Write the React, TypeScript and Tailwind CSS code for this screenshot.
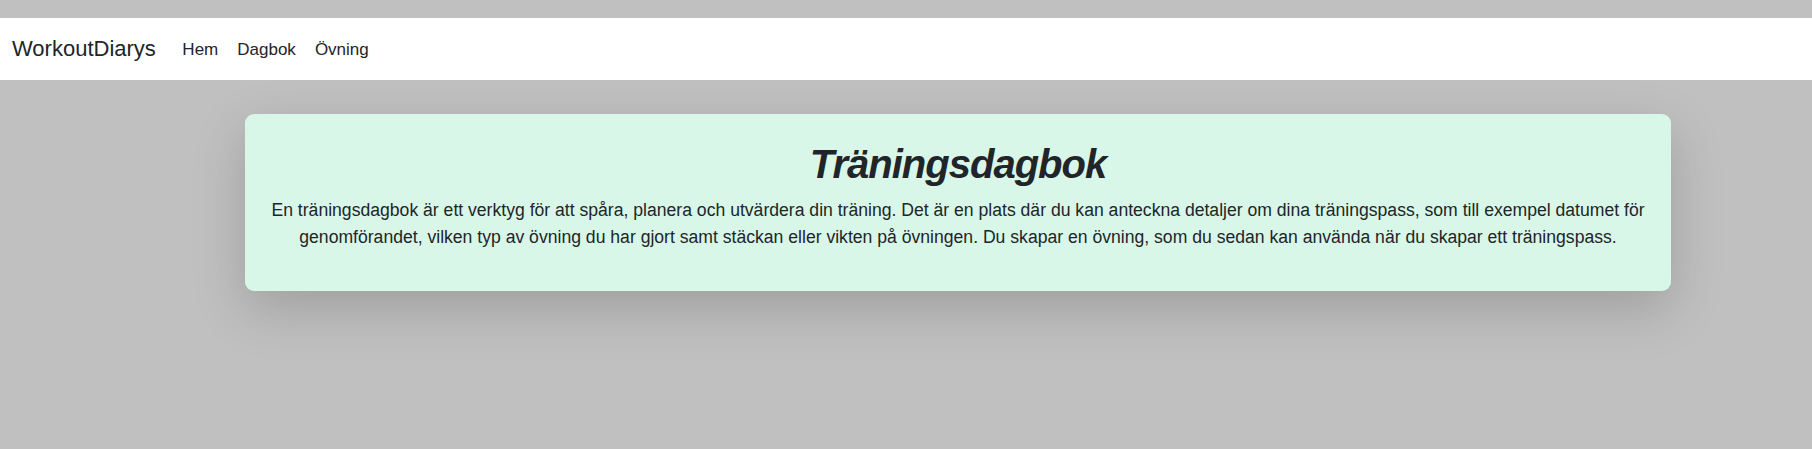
import React from "react";

export default function App() {
  return (
    <div
      className="min-h-screen w-full bg-[#c0c0c0] pt-[18px] text-[#212529]"
      style={{ fontFamily: '"Liberation Sans", Arial, sans-serif' }}
    >
      <nav className="flex h-[62px] items-center bg-white pl-[12px]">
        <span className="mr-[17px] text-[22px] leading-none">WorkoutDiarys</span>
        <ul className="flex items-center">
          <li className="px-[9.5px] text-[17px] leading-none">Hem</li>
          <li className="px-[9.5px] text-[17px] leading-none">Dagbok</li>
          <li className="px-[9.5px] text-[17px] leading-none">Övning</li>
        </ul>
      </nav>
      <div className="ml-[245px] mt-[34px] w-[1426px] rounded-[9px] bg-[#d9f7e8] px-[17px] pb-[40px] pt-[26px] text-center shadow-[0_18px_53px_rgba(0,0,0,0.175)]">
        <h1 className="mb-[9px] text-[40px] font-bold italic leading-[48px] tracking-[-1px]">
          Träningsdagbok
        </h1>
        <p className="text-[17.6px] leading-[27px]">
          En träningsdagbok är ett verktyg för att spåra, planera och utvärdera din träning. Det är en plats där du kan anteckna detaljer om dina träningspass, som till exempel datumet för genomförandet, vilken typ av övning du har gjort samt stäckan eller vikten på övningen. Du skapar en övning, som du sedan kan använda när du skapar ett träningspass.
        </p>
      </div>
    </div>
  );
}
